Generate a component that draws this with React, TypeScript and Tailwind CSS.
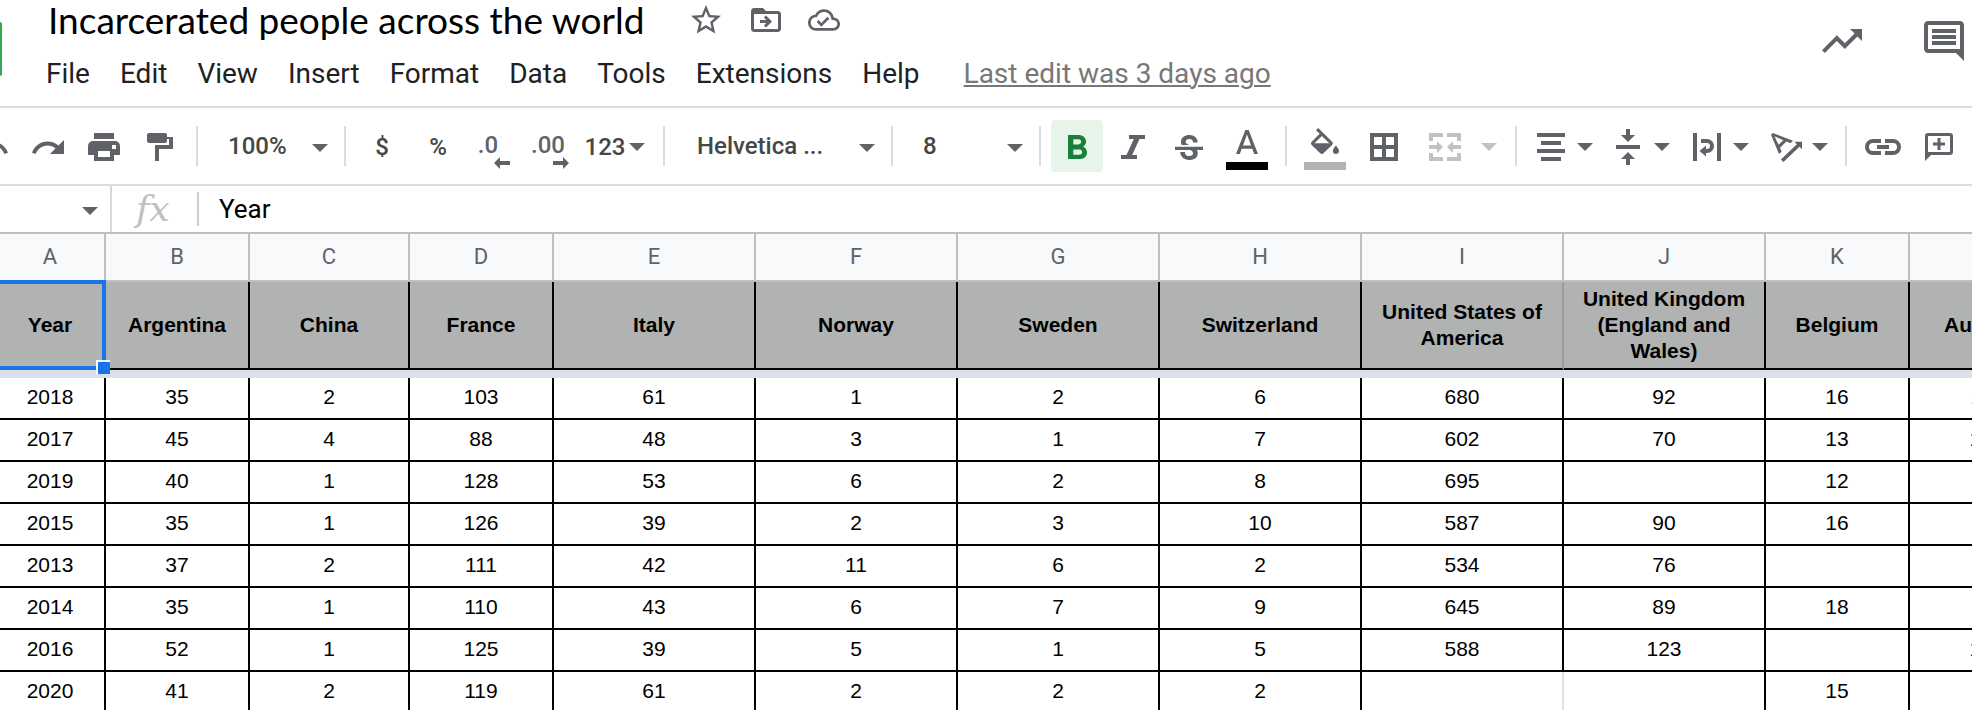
import type { ReactNode } from "react";

type GlyphProps = { box: string; w: number; h: number; d: string; className?: string };

function Glyph({ box, w, h, d, className = "" }: GlyphProps) {
  return (
    <svg
      viewBox={box}
      width={w}
      height={h}
      preserveAspectRatio="none"
      fill="currentColor"
      fillRule="evenodd"
      aria-hidden="true"
      className={"shrink-0 " + className}
    >
      <path d={d} />
    </svg>
  );
}

function Caret({ className = "" }: { className?: string }) {
  return <Glyph box="0 0 16 8" w={16} h={8} d="M0 0h16L8 8z" className={className} />;
}

function Tool({ label, className = "w-[52px]", children }: { label: string; className?: string; children: ReactNode }) {
  return (
    <button
      type="button"
      aria-label={label}
      className={"flex h-[52px] shrink-0 items-center justify-center rounded pt-0.5 text-[#5f6368] " + className}
    >
      {children}
    </button>
  );
}

function Separator({ className = "" }: { className?: string }) {
  return <div className={"h-10 w-0.5 shrink-0 bg-[#dadce0] " + className} />;
}

function Picker({ label, value, className }: { label: string; value: string; className: string }) {
  return (
    <div className={"relative flex h-[52px] shrink-0 items-center " + className}>
      <select
        aria-label={label}
        defaultValue={value}
        className="w-full appearance-none bg-transparent text-2xl font-medium text-[#444746] outline-none"
      >
        <option>{value}</option>
      </select>
      <Caret className="pointer-events-none absolute top-6 right-4 text-[#5f6368]" />
    </div>
  );
}

const REDO =
  "M18.4 10.6C16.55 8.99 14.15 8 11.5 8c-4.65 0-8.58 3.03-9.96 7.22L3.9 16c1.05-3.19 4.05-5.5 7.6-5.5 1.95 0 3.73.72 5.12 1.88L13 16h9V7l-3.6 3.6z";
const STAR =
  "M22 9.24l-7.19-.62L12 2 9.19 8.63 2 9.24l5.46 4.73L5.82 21 12 17.27 18.18 21l-1.63-7.03L22 9.24zM12 15.4l-3.76 2.27 1-4.28-3.32-2.88 4.38-.38L12 6.1l1.71 4.04 4.38.38-3.32 2.88 1 4.28L12 15.4z";
const MOVE =
  "M20 6h-8l-2-2H4c-1.1 0-1.99.9-1.99 2L2 18c0 1.1.9 2 2 2h16c1.1 0 2-.9 2-2V8c0-1.1-.9-2-2-2zm0 12H4V8h16v10zM12 17l4-4-4-4-1.41 1.41L12.17 12H8v2h4.17l-1.58 1.59z";
const CLOUD =
  "M19.35 10.04C18.67 6.59 15.64 4 12 4 9.11 4 6.61 5.64 5.36 8.04 2.35 8.36 0 10.9 0 14c0 3.31 2.69 6 6 6h13c2.76 0 5-2.24 5-5 0-2.64-2.05-4.78-4.65-4.96zM19 18H6c-2.21 0-4-1.79-4-4 0-2.05 1.53-3.76 3.56-3.97l1.07-.11.5-.95C8.08 7.14 9.94 6 12 6c2.62 0 4.88 1.86 5.39 4.43l.3 1.5 1.53.11c1.56.1 2.78 1.41 2.78 2.96 0 1.65-1.35 3-3 3zm-9-3.82l-2.09-2.09L6.5 13.5 10 17l6.01-6.01-1.41-1.41z";
const TREND = "M16 6l2.29 2.29-4.88 4.88-4-4L2 16.59 3.41 18l6-6 4 4 6.3-6.29L22 12V6z";
const COMMENTS =
  "M4 2h16c1.1 0 2 .9 2 2v18l-4-4H4c-1.1 0-2-.9-2-2V4c0-1.1.9-2 2-2zm0 2v12h16V4zM6 6h12v2H6zM6 9h12v2H6zM6 12h12v2H6z";
const PRINT =
  "M6 0h20v6H6zM5 8h22a5 5 0 0 1 5 5v9h-6v6H6v-6H0v-9a5 5 0 0 1 5-5zM24 12h4v4h-4zM10 18h12v6H10z";
const ROLLER =
  "M2 0h16a2 2 0 0 1 2 2v2h6v12H12v12H8V12h14V6h-2v2a2 2 0 0 1-2 2H2a2 2 0 0 1-2-2V2a2 2 0 0 1 2-2z";
const BOLD =
  "M15.6 10.79c.97-.67 1.65-1.77 1.65-2.79 0-2.26-1.75-4-4-4H7v14h7.04c2.09 0 3.71-1.7 3.71-3.79 0-1.52-.86-2.82-2.15-3.42zM10 6.5h3c.83 0 1.5.67 1.5 1.5s-.67 1.5-1.5 1.5h-3v-3zm3.5 9H10v-3h3.5c.83 0 1.5.67 1.5 1.5s-.67 1.5-1.5 1.5z";
const ITALIC = "M8 0h16v4h-5.5l-7.3 16H16v4H0v-4h5.5l7.3-16H8z";
const STRIKE =
  "M6.85 7.08C6.85 4.37 9.45 3 12.24 3c1.64 0 3 .49 3.9 1.28.77.65 1.46 1.73 1.46 3.24h-3.01c0-.31-.05-.59-.15-.85-.29-.86-1.2-1.28-2.25-1.28-1.86 0-2.34 1.02-2.34 1.7 0 .48.25.88.74 1.21.38.25.77.48 1.41.7H7.39c-.21-.34-.54-.89-.54-1.92zM21 12v-2H3v2h9.62c1.15.45 1.96.75 1.96 1.97 0 1-.81 1.67-2.28 1.67-1.54 0-2.93-.54-2.93-2.51H6.4c0 .55.08 1.13.24 1.58.81 2.29 3.29 3.3 5.67 3.3 2.27 0 5.3-.89 5.3-4.05 0-.3-.01-1.16-.48-1.94H21V12z";
const TEXT_COLOR =
  "M11 3L5.5 17h2.25l1.12-3h6.25l1.12 3h2.25L13 3h-2zm-1.38 9L12 5.67 14.38 12H9.62z";
const FILL =
  "M16.56 8.94L7.62 0 6.21 1.41l2.38 2.38-5.15 5.15c-.59.59-.59 1.54 0 2.12l5.5 5.5c.29.29.68.44 1.06.44s.77-.15 1.06-.44l5.5-5.5c.59-.58.59-1.53 0-2.12zM5.21 10L10 5.21 14.79 10H5.21zM19 11.5s-2 2.17-2 3.5c0 1.1.9 2 2 2s2-.9 2-2c0-1.33-2-3.5-2-3.5z";
const BORDERS = "M0 0h28v28H0zM4 4v8h8V4zM16 4v8h8V4zM4 16v8h8v-8zM16 16v8h8v-8z";
const MERGE =
  "M0 0h14v4H4v4H0zM18 0h14v8h-4V4H18zM0 20h4v4h10v4H0zM28 20h4v8H18v-4h10zM0 12h8V8l6 6-6 6v-4H0zM32 12h-8V8l-6 6 6 6v-4h8z";
const ALIGN = "M0 0h28v4H0zM4 8h20v4H4zM0 16h28v4H0zM4 24h20v4H4z";
const VALIGN = "M10 0h4v6h5l-7 7-7-7h5zM0 16h24v4H0zM12 23l7 7h-5v6h-4v-6H5z";
const WRAP =
  "M0 0h4v28H0zM24 0h4v28h-4zM8 6h6a7 7 0 0 1 0 14h-1v3.500l-6.500-5.500 6.500-5.500v3.500h1a3 3 0 0 0 0-6H8z";
const ROTATE =
  "M4.49 4.21L3.43 5.27 7.85 16.4l1.48-1.48-.92-2.19 3.54-3.54 2.19.92 1.48-1.48L4.49 4.21zm3.09 6.8L5.36 6.14l4.87 2.23-2.65 2.64zm12.99-1.68h-4.24l1.41 1.41-8.84 8.84L10.32 21l8.84-8.84 1.41 1.41V9.33z";
const LINK =
  "M16 0v4H8a4 4 0 0 0 0 8h8v4H8A8 8 0 0 1 8 0zM20 0h8a8 8 0 0 1 0 16h-8v-4h8a4 4 0 0 0 0-8h-8zM12 6h12v4H12z";
const ADD_COMMENT =
  "M3 0h22a3 3 0 0 1 3 3v16a3 3 0 0 1-3 3H6l-6 6V3a3 3 0 0 1 3-3zM3 3v16h22V3zM12.500 5h3v4.500H20v3h-4.500V17h-3v-4.500H8v-3h4.500z";

const MENUS = ["File", "Edit", "View", "Insert", "Format", "Data", "Tools", "Extensions", "Help"];

const COLUMNS = [
  { letter: "A", name: "Year", width: "w-[106px]" },
  { letter: "B", name: "Argentina", width: "w-[144px]" },
  { letter: "C", name: "China", width: "w-[160px]" },
  { letter: "D", name: "France", width: "w-[144px]" },
  { letter: "E", name: "Italy", width: "w-[202px]" },
  { letter: "F", name: "Norway", width: "w-[202px]" },
  { letter: "G", name: "Sweden", width: "w-[202px]" },
  { letter: "H", name: "Switzerland", width: "w-[202px]" },
  { letter: "I", name: "United States of America", width: "w-[202px]" },
  { letter: "J", name: "United Kingdom (England and Wales)", width: "w-[202px]" },
  { letter: "K", name: "Belgium", width: "w-[144px]" },
  { letter: "L", name: "Australia", width: "w-[160px]" },
];

const ROWS: string[][] = [
  ["2018", "35", "2", "103", "61", "1", "2", "6", "680", "92", "16", "119"],
  ["2017", "45", "4", "88", "48", "3", "1", "7", "602", "70", "13", "104"],
  ["2019", "40", "1", "128", "53", "6", "2", "8", "695", "", "12", ""],
  ["2015", "35", "1", "126", "39", "2", "3", "10", "587", "90", "16", ""],
  ["2013", "37", "2", "111", "42", "11", "6", "2", "534", "76", "", ""],
  ["2014", "35", "1", "110", "43", "6", "7", "9", "645", "89", "18", ""],
  ["2016", "52", "1", "125", "39", "5", "1", "5", "588", "123", "", "108"],
  ["2020", "41", "2", "119", "61", "2", "2", "2", "", "", "15", ""],
];

function TopBar() {
  return (
    <header className="flex h-[108px] items-start border-b-2 border-[#dadce0]">
      <div className="mt-[22px] h-[54px] w-0.5 shrink-0 rounded-r-sm bg-[#34a853]" />
      <div className="ml-11 min-w-0 flex-1">
        <div className="flex h-11 items-center pb-1 pl-0.5 text-[#5f6368]">
          <h1 className="font-['Lato',sans-serif] text-[37px] leading-[44px] text-black">
            Incarcerated people across the world
          </h1>
          <div className="ml-11 flex items-center gap-6">
            <button type="button" aria-label="Star">
              <Glyph box="0 0 24 24" w={36} h={36} d={STAR} />
            </button>
            <button type="button" aria-label="Move">
              <Glyph box="0 0 24 24" w={36} h={36} d={MOVE} />
            </button>
            <button type="button" aria-label="See document status">
              <Glyph box="0 0 24 24" w={32} h={32} d={CLOUD} />
            </button>
          </div>
        </div>
        <div className="flex items-center pt-3 text-[28px] leading-9">
          <nav className="flex gap-[30px] text-[#202124]">
            {MENUS.map((menu) => (
              <button type="button" key={menu}>
                {menu}
              </button>
            ))}
          </nav>
          <a href="#history" className="ml-11 text-[#777] underline decoration-2 underline-offset-2">
            Last edit was 3 days ago
          </a>
        </div>
      </div>
      <div className="flex gap-[54px] pt-[17px] pr-1 text-[#5f6368]">
        <button type="button" aria-label="Activity dashboard">
          <Glyph box="0 0 24 24" w={48} h={48} d={TREND} />
        </button>
        <button type="button" aria-label="Open comment history">
          <Glyph box="0 0 24 24" w={48} h={48} d={COMMENTS} />
        </button>
      </div>
    </header>
  );
}

function Toolbar() {
  return (
    <div role="toolbar" className="flex h-[78px] items-center border-b-2 border-[#dadce0]">
      <div className="-ml-[34px] flex gap-1">
        <Tool label="Undo">
          <Glyph box="1.54 7 20.46 9" w={32} h={14} d={REDO} className="-scale-x-100" />
        </Tool>
        <Tool label="Redo">
          <Glyph box="1.54 7 20.46 9" w={32} h={14} d={REDO} />
        </Tool>
        <Tool label="Print">
          <Glyph box="0 0 32 28" w={32} h={28} d={PRINT} />
        </Tool>
        <Tool label="Paint format">
          <Glyph box="0 0 26 28" w={26} h={28} d={ROLLER} />
        </Tool>
      </div>
      <Separator className="ml-[10px]" />
      <Picker label="Zoom" value="100%" className="w-[146px] pl-[30px]" />
      <Separator className="mr-[10px]" />
      <div className="flex gap-1 text-2xl font-medium">
        <Tool label="Format as currency">
          <span className="text-[#444746]">$</span>
        </Tool>
        <Tool label="Format as percent">
          <span className="text-[#444746]">%</span>
        </Tool>
        <Tool label="Decrease decimal places">
          <span className="flex flex-col pt-2">
            <span className="pr-3 leading-6">.0</span>
            <Glyph box="0 0 16 12" w={16} h={12} d="M0 6l6-6v4h10v4H6v4z" className="self-end" />
          </span>
        </Tool>
        <Tool label="Increase decimal places">
          <span className="flex flex-col pt-2">
            <span className="pr-1 leading-6">.00</span>
            <Glyph box="0 0 16 12" w={16} h={12} d="M16 6l-6-6v4H0v4h10v4z" className="self-end" />
          </span>
        </Tool>
        <Tool label="More formats" className="w-[74px] gap-1 pr-1">
          <span className="text-[#444746]">123</span>
          <Caret />
        </Tool>
      </div>
      <Separator className="ml-[9px]" />
      <Picker label="Font" value="Helvetica ..." className="w-[226px] pl-8" />
      <Separator />
      <Picker label="Font size" value="8" className="w-[146px] pl-[30px]" />
      <Separator className="mr-[10px]" />
      <div className="flex gap-1">
        <Tool label="Bold" className="w-[52px] bg-[#e6f4ea] text-[#188038]!">
          <Glyph box="7 4 10.75 14" w={19} h={24} d={BOLD} />
        </Tool>
        <Tool label="Italic">
          <Glyph box="0 0 24 24" w={24} h={24} d={ITALIC} />
        </Tool>
        <Tool label="Strikethrough">
          <Glyph box="3 3 18 15" w={28} h={25} d={STRIKE} />
        </Tool>
        <Tool label="Text color" className="w-14">
          <span className="flex flex-col items-center gap-2 pt-1.5">
            <Glyph box="5.5 3 13 14" w={22} h={24} d={TEXT_COLOR} />
            <span className="h-2 w-[42px] bg-black" />
          </span>
        </Tool>
      </div>
      <Separator className="mr-3 ml-[10px]" />
      <div className="flex gap-1">
        <Tool label="Fill color">
          <span className="flex flex-col items-center gap-2 pt-1">
            <Glyph box="3 0 18 17" w={28} h={26} d={FILL} />
            <span className="h-2 w-[42px] bg-[#b0b3b2]" />
          </span>
        </Tool>
        <Tool label="Borders" className="ml-[3px] w-[52px]">
          <Glyph box="0 0 28 28" w={28} h={28} d={BORDERS} />
        </Tool>
        <Tool label="Merge cells" className="w-[98px] gap-5 text-[#c1c2c4]!">
          <Glyph box="0 0 32 28" w={32} h={28} d={MERGE} />
          <Caret />
        </Tool>
      </div>
      <Separator className="mr-[11px] ml-[3px]" />
      <div className="flex gap-1">
        <Tool label="Horizontal align" className="w-[74px] gap-3">
          <Glyph box="0 0 28 28" w={28} h={28} d={ALIGN} />
          <Caret />
        </Tool>
        <Tool label="Vertical align" className="w-[74px] gap-[14px]">
          <Glyph box="0 0 24 36" w={24} h={36} d={VALIGN} />
          <Caret />
        </Tool>
        <Tool label="Text wrapping" className="w-[74px] gap-3">
          <Glyph box="0 0 28 28" w={28} h={28} d={WRAP} />
          <Caret />
        </Tool>
        <Tool label="Text rotation" className="w-[74px] gap-[10px]">
          <Glyph box="3.43 4.21 17.14 16.8" w={31} h={29} d={ROTATE} />
          <Caret />
        </Tool>
      </div>
      <Separator className="mr-[10px] ml-[9px]" />
      <div className="flex gap-1">
        <Tool label="Insert link">
          <Glyph box="0 0 36 16" w={36} h={16} d={LINK} />
        </Tool>
        <Tool label="Insert comment">
          <Glyph box="0 0 28 28" w={28} h={28} d={ADD_COMMENT} />
        </Tool>
      </div>
    </div>
  );
}

function FormulaBar() {
  return (
    <div className="flex h-12 items-center border-b-2 border-[#c0c0c0]">
      <button
        type="button"
        aria-label="Name box"
        className="flex h-full w-28 items-center justify-end border-r-2 border-[#d8d8d8] pt-1 pr-3 text-[#5f6368]"
      >
        <Caret />
      </button>
      <label
        htmlFor="formula"
        className="w-[85px] pl-6 font-['DejaVu_Serif',serif] text-[36px] leading-[42px] text-[#c0c0c0] italic"
      >
        fx
      </label>
      <div className="h-[34px] w-0.5 bg-[#cccccc]" />
      <input
        id="formula"
        defaultValue="Year"
        className="min-w-0 flex-1 bg-transparent pl-5 text-[26px] leading-9 text-black outline-none"
      />
    </div>
  );
}

function Sheet() {
  return (
    <table className="w-[2070px] table-fixed border-separate border-spacing-0 text-center font-['Liberation_Sans',Arial,sans-serif] text-[21px] leading-[26px] text-black">
      <thead>
        <tr>
          {COLUMNS.map((c, i) => (
            <th
              key={c.letter}
              scope="col"
              className={
                "h-12 border-r-2 border-b-2 border-[#c0c0c0] bg-[#f8f9fa] p-0 font-[Roboto,sans-serif] text-[22px] font-normal text-[#5f6368] " +
                c.width +
                (i === 0 ? " pr-1" : "")
              }
            >
              {c.letter}
            </th>
          ))}
        </tr>
        <tr>
          {COLUMNS.map((c, i) => (
            <th
              key={c.letter}
              scope="col"
              className={
                "relative h-[88px] border-r-2 border-b-2 border-black bg-[#b0b3b2] py-0 font-bold " +
                (i === 0 ? "pr-1 pl-0" : "px-3") +
                (c.letter === "I" ? " border-r-[#9c9e9d]" : "")
              }
            >
              {c.name}
              {i === 0 && (
                <>
                  <span className="absolute -top-0.5 -right-0.5 -bottom-0.5 -left-1 z-10 border-4 border-[#1a73e8]" />
                  <span className="absolute -right-1.5 -bottom-1.5 z-20 size-3.5 border-t-2 border-l-2 border-white bg-[#1a73e8]" />
                </>
              )}
            </th>
          ))}
        </tr>
      </thead>
      <tbody>
        <tr>
          <td colSpan={COLUMNS.length} className="h-2 bg-[#dadfe8] p-0" />
        </tr>
        {ROWS.map((row, r) => {
          const last = r === ROWS.length - 1;
          return (
            <tr key={row[0]}>
              {row.map((value, i) => (
                <td
                  key={COLUMNS[i].letter}
                  className={
                    "border-r-2 border-black pt-0 pb-0.5 pl-0 " +
                    (last ? "h-10" : "h-[42px] border-b-2") +
                    (i === 0 || i === row.length - 1 ? " pr-1" : " pr-0") +
                    (last && COLUMNS[i].letter === "I" ? " border-r-[#e0e0e0]" : "")
                  }
                >
                  {value}
                </td>
              ))}
            </tr>
          );
        })}
      </tbody>
    </table>
  );
}

export default function App() {
  return (
    <div className="overflow-hidden bg-white font-[Roboto,sans-serif] whitespace-nowrap">
      <TopBar />
      <Toolbar />
      <FormulaBar />
      <main className="whitespace-normal">
        <Sheet />
      </main>
    </div>
  );
}
